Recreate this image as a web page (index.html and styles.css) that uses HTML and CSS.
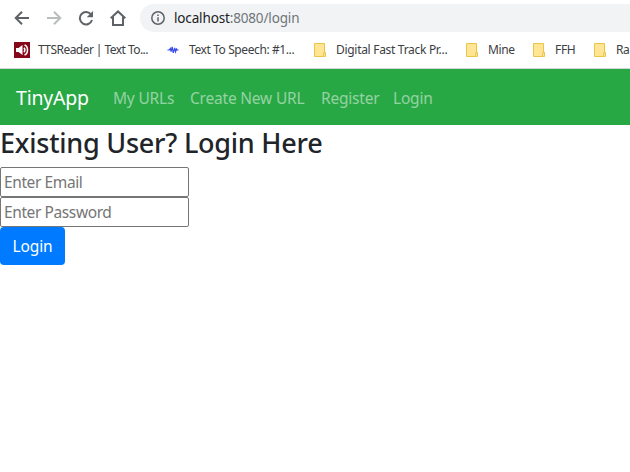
FILE: index.html
```html
<!DOCTYPE html>
<html lang="en">
<head>
<meta charset="utf-8">
<title>TinyApp</title>
<link rel="stylesheet" href="styles.css">
</head>
<body>
<header class="browser">
  <div class="toolbar">
    <svg class="tool" viewBox="0 0 16 16"><path d="M15 8H2M8 1.7 1.7 8 8 14.3"/></svg>
    <svg class="tool disabled" viewBox="0 0 16 16"><path d="M1 8h13M8 1.7 14.3 8 8 14.3"/></svg>
    <svg class="tool" viewBox="0 0 16 16"><path d="M13.2 4.7A6.2 6.2 0 1 0 14 10"/><path class="solid" d="M15 1v6.3H8.7z"/></svg>
    <svg class="tool" viewBox="0 0 16 16"><path d="M.7 8.3 8 1.4l7.3 6.9M3 7v7.9h10V7"/></svg>
    <div class="address">
      <svg class="info" viewBox="0 0 14 14"><circle cx="7" cy="7" r="6.2"/><path d="M7 6.2v4.3M7 3.4v1.5"/></svg>
      <span class="url">localhost<span class="path">:8080/login</span></span>
    </div>
  </div>
  <nav class="bookmarks">
    <a class="bookmark reader"><svg class="speaker" viewBox="0 0 16 16"><path class="tile" d="M0 0h16v16H0z"/><path class="horn" d="M2 6h2.5L8.5 3v10l-4-3H2z"/><path class="wave" d="M10 5.8c1 1.2 1 3.2 0 4.4M10.5 3c4 1.4 4 8.6 0 10"/></svg><span>TTSReader | Text To...</span></a>
    <a class="bookmark speech"><svg class="pulse" viewBox="0 0 12 10"><path d="M.5 5h1.8l1-1.5.8 3L5.2 1.8l1 6 1.5-5 .8 4 1-2.8.8 1h1.2"/></svg><span>Text To Speech: #1...</span></a>
    <a class="bookmark digital"><svg class="folder" viewBox="0 0 12 14"><path d="M.5.5h10v9h1v4H.5z"/><path d="M9.5 13V10q0-.5.5-.5h1.5v4"/></svg><span>Digital Fast Track Pr...</span></a>
    <a class="bookmark mine"><svg class="folder" viewBox="0 0 12 14"><path d="M.5.5h10v9h1v4H.5z"/><path d="M9.5 13V10q0-.5.5-.5h1.5v4"/></svg><span>Mine</span></a>
    <a class="bookmark ffh"><svg class="folder" viewBox="0 0 12 14"><path d="M.5.5h10v9h1v4H.5z"/><path d="M9.5 13V10q0-.5.5-.5h1.5v4"/></svg><span>FFH</span></a>
    <a class="bookmark"><svg class="folder" viewBox="0 0 12 14"><path d="M.5.5h10v9h1v4H.5z"/><path d="M9.5 13V10q0-.5.5-.5h1.5v4"/></svg><span>Ra</span></a>
  </nav>
</header>
<nav class="navbar">
  <a class="brand">TinyApp</a>
  <a class="link urls">My URLs</a>
  <a class="link create">Create New URL</a>
  <a class="link register">Register</a>
  <a class="link">Login</a>
</nav>
<main>
  <h1>Existing User? Login Here</h1>
  <form>
    <input type="email" placeholder="Enter Email">
    <input type="password" placeholder="Enter Password">
    <button type="button">Login</button>
  </form>
</main>
</body>
</html>
```
FILE: styles.css
```css
* { box-sizing: border-box; }
body {
  margin: 0;
  overflow: hidden;
  background: #fff;
  color: #212529;
  font: 15.5px/24px "Noto Sans", "Open Sans", sans-serif;
}
svg { display: block; flex: none; fill: none; }
.browser { height: 69px; border-bottom: 1px solid #d5d8db; overflow: hidden; }
.toolbar {
  display: flex;
  align-items: center;
  gap: 16px;
  height: 37px;
  padding-left: 14px;
  border-bottom: 1px solid transparent;
}
.tool { width: 16px; height: 16px; stroke: #5f6368; stroke-width: 2; }
.tool .solid { fill: #5f6368; stroke: none; }
.disabled { stroke: #babcbe; }
.address {
  display: flex;
  align-items: center;
  flex: 1;
  height: 28px;
  margin-left: -2px;
  padding-left: 11px;
  border-radius: 14px 0 0 14px;
  background: #f1f3f4;
}
.info { width: 14px; height: 14px; stroke: #5f6368; stroke-width: 1.5; }
.url { margin-left: 9px; font-size: 13.5px; letter-spacing: -.15px; color: #202124; }
.path { color: #70757a; }
.bookmarks { display: flex; height: 31px; padding: 1px 0 0 14px; }
.bookmark {
  display: flex;
  align-items: center;
  flex: none;
  height: 24px;
  color: #3c4043;
  font-size: 12px;
  letter-spacing: -.35px;
  white-space: nowrap;
}
.reader { width: 153px; gap: 8px; letter-spacing: -.55px; }
.speech { width: 147px; gap: 10px; letter-spacing: -.4px; }
.digital { width: 152px; letter-spacing: -.3px; }
.mine { width: 67px; }
.ffh { width: 61px; }
.speaker { width: 16px; height: 16px; }
.tile { fill: #850719; }
.horn { fill: #fff; }
.wave { stroke: #fff; stroke-width: 1.5; }
.pulse { width: 12px; height: 10px; stroke: #3949ee; stroke-width: 1.2; }
.folder { width: 12px; height: 14px; margin-right: 10px; fill: #ffe594; stroke: #e8c64c; }
.navbar {
  display: flex;
  align-items: center;
  height: 56px;
  padding: 1px 0 0 16px;
  background: #28a745;
  white-space: nowrap;
}
.brand { width: 97px; color: #fff; font-size: 19.5px; letter-spacing: -.2px; }
.link { color: rgba(255, 255, 255, .5); letter-spacing: -.2px; }
.urls { width: 77px; }
.create { width: 131px; }
.register { width: 72px; }
h1 {
  height: 34px;
  margin: 0 0 8px;
  font-size: 27px;
  font-weight: 500;
  line-height: 35px;
  letter-spacing: -.24px;
  white-space: nowrap;
}
form { display: flex; flex-direction: column; align-items: flex-start; }
input {
  width: 189px;
  height: 30px;
  padding: 1px 3px;
  border: 1px solid #767676;
  border-radius: 2px;
  font: inherit;
  letter-spacing: -.4px;
}
input::placeholder { color: #757575; }
button {
  width: 65px;
  height: 38px;
  padding: 0;
  border: 0;
  border-radius: 4px;
  background: #007bff;
  color: #fff;
  font: inherit;
  letter-spacing: -.1px;
}
```
